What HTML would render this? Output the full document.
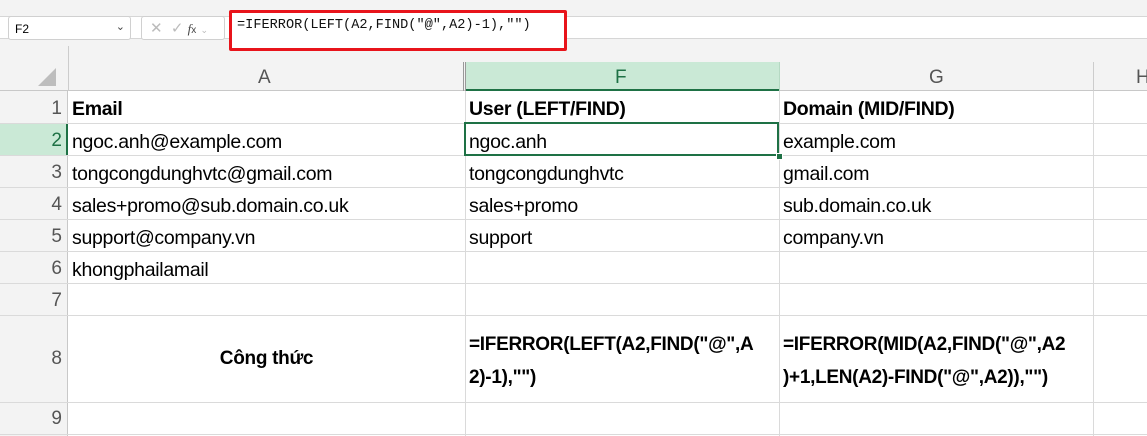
<!DOCTYPE html>
<html><head><meta charset="utf-8"><style>
*{margin:0;padding:0;box-sizing:border-box}
body{width:1147px;height:436px;overflow:hidden;background:#fff;position:relative;font-family:"Liberation Sans",sans-serif;}
.a{position:absolute}
.t{position:absolute;font-size:19.5px;color:#000;white-space:nowrap;letter-spacing:-0.3px}
.b{font-weight:bold}
.rh{position:absolute;left:0;width:68px;text-align:right;padding-right:6px;font-size:19px;color:#555}
.hl{position:absolute;left:0;width:1147px;height:1px;background:#dadada}
.vl{position:absolute;top:62px;width:1px;height:374px;background:#dadada}
</style></head><body>
<div class="a" style="left:0;top:0;width:1147px;height:62px;background:#f3f3f3"></div>
<div class="a" style="left:0;top:16px;width:1147px;height:23px;background:#fff;border-top:1px solid #d6d6d6;border-bottom:1px solid #d6d6d6"></div>
<div class="a" style="left:8px;top:16px;width:123px;height:24px;background:#fff;border:1px solid #d0d0d0;border-radius:3px;font-size:12px;padding:5px 0 0 6px">F2<span style="position:absolute;right:5px;top:3px;font-size:11px;color:#444">&#8964;</span></div>
<div class="a" style="left:141px;top:16px;width:84px;height:24px;background:#fff;border:1px solid #d0d0d0;border-radius:3px;color:#bbb;font-size:15px;padding:2px 0 0 8px">✕ &nbsp;✓ <i style="color:#444;font-family:'Liberation Serif',serif;font-size:13px">f</i><span style="color:#444;font-size:10px">x</span> <span style="font-size:9px">⌄</span></div>
<div class="a" style="left:229px;top:10px;width:338px;height:41px;border:3px solid #e8141b;border-radius:2px;background:#fff"></div>
<div class="a" style="left:237px;top:18px;font-family:'Liberation Mono',monospace;font-size:13.6px;color:#111">=IFERROR(LEFT(A2,FIND("@",A2)-1),"")</div>
<div class="a" style="left:0;top:62px;width:1147px;height:29px;background:#f3f3f3;border-bottom:1px solid #c8c8c8"></div>
<div class="a" style="left:465px;top:62px;width:314px;height:29px;background:#cae9d6;border-bottom:2px solid #1e7145"></div>
<div class="a" style="left:68px;top:46px;width:1px;height:45px;background:#ccc"></div>
<svg class="a" style="left:38px;top:68px" width="18" height="18"><path d="M18 0V18H0Z" fill="#bdbdbd"/></svg>
<div class="a" style="left:463px;top:62px;width:3px;height:29px;border-left:1px solid #999;border-right:1px solid #999"></div>
<div class="a" style="left:1093px;top:62px;width:1px;height:29px;background:#ccc"></div>
<div class="a" style="left:779px;top:62px;width:1px;height:29px;background:#b5d9c3"></div>
<div class="a" style="left:258px;top:67px;font-size:19px;color:#555">A</div>
<div class="a" style="left:615px;top:67px;font-size:19px;color:#1e7145">F</div>
<div class="a" style="left:929px;top:67px;font-size:19px;color:#555">G</div>
<div class="a" style="left:1136px;top:67px;font-size:19px;color:#555">H</div>
<div class="a" style="left:0;top:91px;width:68px;height:345px;background:#f3f3f3;border-right:1px solid #c8c8c8"></div>
<div class="a" style="left:0;top:123px;width:68px;height:32px;background:#cae9d6;border-right:2px solid #1e7145"></div>
<div class="hl" style="top:123px"></div><div class="hl" style="top:155px"></div><div class="hl" style="top:187px"></div><div class="hl" style="top:219px"></div><div class="hl" style="top:251px"></div><div class="hl" style="top:283px"></div><div class="hl" style="top:315px"></div><div class="hl" style="top:402px"></div><div class="hl" style="top:434px"></div>
<div class="vl" style="left:465px;top:91px;height:345px"></div><div class="vl" style="left:779px;top:91px;height:345px"></div><div class="vl" style="left:1093px;top:91px;height:345px"></div>
<div class="rh" style="top:98px">1</div><div class="rh" style="top:130px;color:#1e7145">2</div><div class="rh" style="top:162px">3</div><div class="rh" style="top:194px">4</div><div class="rh" style="top:226px">5</div><div class="rh" style="top:258px">6</div><div class="rh" style="top:290px">7</div><div class="rh" style="top:348px">8</div><div class="rh" style="top:408px">9</div>
<div class="t b" style="left:72px;top:98px">Email</div>
<div class="t b" style="left:469px;top:98px">User (LEFT/FIND)</div>
<div class="t b" style="left:783px;top:98px">Domain (MID/FIND)</div>
<div class="t" style="left:72px;top:131px">ngoc.anh@example.com</div>
<div class="t" style="left:469px;top:131px">ngoc.anh</div>
<div class="t" style="left:783px;top:131px">example.com</div>
<div class="t" style="left:72px;top:163px">tongcongdunghvtc@gmail.com</div>
<div class="t" style="left:469px;top:163px">tongcongdunghvtc</div>
<div class="t" style="left:783px;top:163px">gmail.com</div>
<div class="t" style="left:72px;top:195px">sales+promo@sub.domain.co.uk</div>
<div class="t" style="left:469px;top:195px">sales+promo</div>
<div class="t" style="left:783px;top:195px">sub.domain.co.uk</div>
<div class="t" style="left:72px;top:227px">support@company.vn</div>
<div class="t" style="left:469px;top:227px">support</div>
<div class="t" style="left:783px;top:227px">company.vn</div>
<div class="t" style="left:72px;top:259px">khongphailamail</div>
<div class="t b" style="left:68px;width:397px;text-align:center;top:348px;font-size:19px">Công thức</div>
<div class="t b" style="left:469px;top:328px;font-size:19px;line-height:33px">=IFERROR(LEFT(A2,FIND("@",A<br>2)-1),"")</div>
<div class="t b" style="left:783px;top:328px;font-size:19px;line-height:33px">=IFERROR(MID(A2,FIND("@",A2<br>)+1,LEN(A2)-FIND("@",A2)),"")</div>
<div class="a" style="left:464px;top:122px;width:315px;height:34px;border:2px solid #1e7145"></div>
<div class="a" style="left:776px;top:153px;width:7px;height:7px;background:#1e7145;border:1px solid #fff"></div>
</body></html>
